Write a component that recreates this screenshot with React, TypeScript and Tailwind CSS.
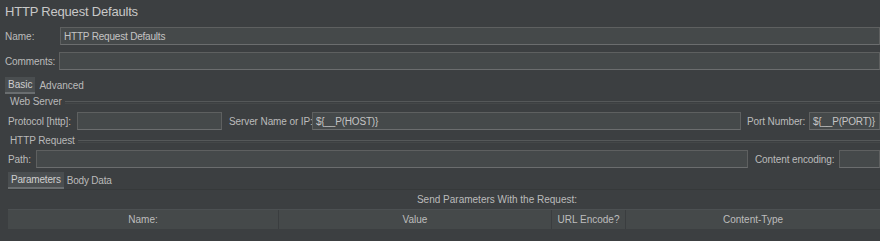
import React from 'react';

const font = { fontFamily: '"Liberation Sans", Arial, sans-serif' };

function Field({ value = '', className = '' }: { value?: string; className?: string }) {
  return (
    <div
      className={`h-[18px] bg-[#45494a] border border-[#5e6060] border-b-[#6b6d6e] flex items-center px-[3px] text-[10px] tracking-[-0.2px] text-[#c4c4c4] whitespace-nowrap overflow-hidden ${className}`}
    >
      {value}
    </div>
  );
}

function GroupTitle({ label }: { label: string }) {
  return (
    <div className="flex items-center gap-[3px] h-[12px] pl-[10px]">
      <span className="text-[10px] tracking-[-0.1px] text-[#b9b9b9] leading-none">{label}</span>
      <div className="flex-1 h-[3px] border-t border-b border-t-[#555859] border-b-[#444748]" />
    </div>
  );
}

export default function App() {
  return (
    <div className="w-[880px] h-[241px] bg-[#3c3f41] text-[#bbbbbb] overflow-hidden" style={font}>
      <div className="pl-[5px] pt-[4px] h-[22px] text-[13px] tracking-[-0.2px] text-[#c8c8c8] leading-[16px]">HTTP Request Defaults</div>

      {/* Name */}
      <div className="flex items-center mt-[5px] pl-[5px]">
        <span className="text-[10px] w-[55px] shrink-0">Name:</span>
        <Field value="HTTP Request Defaults" className="flex-1" />
      </div>

      {/* Comments */}
      <div className="flex items-center mt-[7px] pl-[5px]">
        <span className="text-[10px] tracking-[-0.1px] w-[54px] shrink-0">Comments:</span>
        <Field className="flex-1" />
      </div>

      {/* Basic / Advanced tabs */}
      <div className="flex items-end mt-[7px] pl-[5px] h-[17px] text-[10px]">
        <div className="h-[17px] px-[3px] bg-[#4a4e50] border-b-2 border-[#6a6e70] flex items-center text-[#cfcfcf]">Basic</div>
        <div className="h-[17px] px-[4px] flex items-center">Advanced</div>
      </div>

      <div className="mt-[2px]">
        <GroupTitle label="Web Server" />
      </div>

      {/* Protocol row */}
      <div className="flex items-center mt-[4px] pl-[8px] text-[10px] tracking-[-0.1px] whitespace-nowrap">
        <span className="w-[69px] shrink-0">Protocol [http]:</span>
        <Field className="w-[145px] shrink-0" />
        <span className="ml-[7px] w-[83px] shrink-0">Server Name or IP:</span>
        <Field value="${__P(HOST)}" className="w-[429px] shrink-0" />
        <span className="ml-[6px] w-[62px] shrink-0">Port Number:</span>
        <Field value="${__P(PORT)}" className="flex-1" />
      </div>

      <div className="mt-[5px]">
        <GroupTitle label="HTTP Request" />
      </div>

      {/* Path row */}
      <div className="flex items-center mt-[3px] pl-[8px] text-[10px] tracking-[-0.1px] whitespace-nowrap">
        <span className="w-[28px] shrink-0">Path:</span>
        <Field className="w-[712px] shrink-0" />
        <span className="ml-[7px] w-[84px] shrink-0">Content encoding:</span>
        <Field className="flex-1" />
      </div>

      {/* Parameters / Body Data tabs */}
      <div className="flex items-end mt-[4px] pl-[8px] h-[17px] text-[10px] tracking-[-0.2px]">
        <div className="h-[17px] px-[3px] bg-[#4a4e50] border-b-2 border-[#6a6e70] flex items-center text-[#cfcfcf]">Parameters</div>
        <div className="h-[17px] px-[3px] flex items-center">Body Data</div>
      </div>

      <div className="ml-[8px] border-t border-[#36393a]">
        <div className="h-[19px] flex items-center justify-center text-[10px] pl-[106px]">
          Send Parameters With the Request:
        </div>
        <div className="flex h-[20px] bg-[#45494a] border-t border-[#4c5052] text-[10px] text-[#bdbdbd]">
          <div className="w-[271px] flex items-center justify-center border-r border-[#3a3d3f]">Name:</div>
          <div className="w-[273px] flex items-center justify-center border-r border-[#3a3d3f]">Value</div>
          <div className="w-[74px] flex items-center justify-center border-r border-[#3a3d3f]">URL Encode?</div>
          <div className="flex-1 flex items-center justify-center">Content-Type</div>
        </div>
      </div>
    </div>
  );
}
